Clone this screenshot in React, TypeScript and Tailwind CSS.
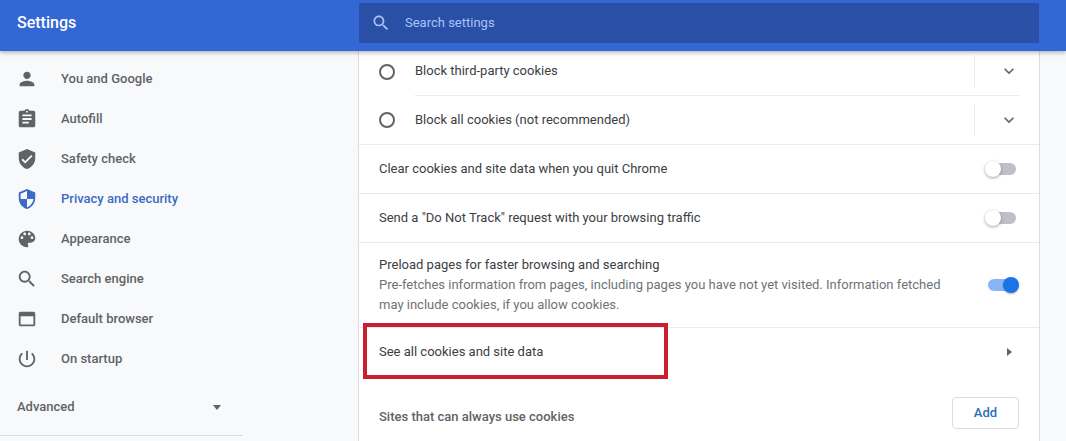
const P = {
  person: "M12 12c2.21 0 4-1.79 4-4s-1.79-4-4-4-4 1.79-4 4 1.79 4 4 4zm0 2c-2.67 0-8 1.34-8 4v2h16v-2c0-2.66-5.33-4-8-4z",
  assignment: "M19 3h-4.18C14.4 1.84 13.3 1 12 1c-1.3 0-2.4.84-2.82 2H5c-1.1 0-2 .9-2 2v14c0 1.1.9 2 2 2h14c1.1 0 2-.9 2-2V5c0-1.1-.9-2-2-2zm-7 0c.55 0 1 .45 1 1s-.45 1-1 1-1-.45-1-1 .45-1 1-1zm2 14H7v-2h7v2zm3-4H7v-2h10v2zm0-4H7V7h10v2z",
  verified: "M12 1L3 5v6c0 5.55 3.84 10.74 9 12 5.16-1.26 9-6.45 9-12V5l-9-4zm-2 16l-4-4 1.41-1.41L10 14.17l6.59-6.59L18 9l-8 8z",
  security: "M12 1L3 5v6c0 5.55 3.84 10.74 9 12 5.16-1.26 9-6.45 9-12V5l-9-4zm0 10.99h7c-.53 4.12-3.28 7.79-7 8.94V12H5V6.3l7-3.11v8.8z",
  palette: "M12 3c-4.97 0-9 4.03-9 9s4.03 9 9 9c.83 0 1.5-.67 1.5-1.5 0-.39-.15-.74-.39-1.01-.23-.26-.38-.61-.38-.99 0-.83.67-1.5 1.5-1.5H16c2.76 0 5-2.24 5-5 0-4.42-4.03-8-9-8zm-5.5 9c-.83 0-1.5-.67-1.5-1.5S5.67 9 6.5 9 8 9.67 8 10.5 7.33 12 6.5 12zm3-4C8.67 8 8 7.33 8 6.5S8.67 5 9.5 5s1.5.67 1.5 1.5S10.33 8 9.5 8zm5 0c-.83 0-1.5-.67-1.5-1.5S13.67 5 14.5 5s1.5.67 1.5 1.5S15.33 8 14.5 8zm3 4c-.83 0-1.5-.67-1.5-1.5S16.67 9 17.5 9s1.5.67 1.5 1.5-.67 1.5-1.5 1.5z",
  search: "M15.5 14h-.79l-.28-.27C15.41 12.59 16 11.11 16 9.5 16 5.91 13.09 3 9.5 3S3 5.91 3 9.5 5.91 16 9.5 16c1.61 0 3.09-.59 4.23-1.57l.27.28v.79l5 4.99L20.49 19l-4.99-5zm-6 0C7.01 14 5 11.99 5 9.5S7.01 5 9.5 5 14 7.01 14 9.5 11.99 14 9.5 14z",
  web: "M19 4H5c-1.11 0-2 .9-2 2v12c0 1.1.89 2 2 2h14c1.1 0 2-.9 2-2V6c0-1.1-.89-2-2-2zm0 14H5V9h14v9z",
  power: "M13 3h-2v10h2V3zm4.83 2.17l-1.42 1.42C17.99 7.86 19 9.81 19 12c0 3.87-3.13 7-7 7s-7-3.13-7-7c0-2.19 1.01-4.14 2.58-5.42L6.17 5.17C4.23 6.82 3 9.26 3 12c0 4.97 4.03 9 9 9s9-4.03 9-9c0-2.74-1.23-5.18-3.17-6.83z",
  chevron: "M7.41 8.59L12 13.17l4.59-4.58L18 10l-6 6-6-6 1.41-1.41z",
};

function Icon({ d, className }: { d: string; className: string }) {
  return (
    <svg viewBox="0 0 24 24" className={className} fill="currentColor">
      <path d={d} />
    </svg>
  );
}

const nav = [
  { label: "You and Google", icon: P.person },
  { label: "Autofill", icon: P.assignment },
  { label: "Safety check", icon: P.verified },
  { label: "Privacy and security", icon: P.security, active: true },
  { label: "Appearance", icon: P.palette },
  { label: "Search engine", icon: P.search },
  { label: "Default browser", icon: P.web },
  { label: "On startup", icon: P.power },
];

function Toggle({ on }: { on?: boolean }) {
  return (
    <div className="relative w-[34px] h-4 shrink-0">
      <div className={`absolute left-[3px] right-[3px] top-[2px] h-3 rounded-full ${on ? "bg-[#8ab4f8]" : "bg-[#bdc1c6]"}`} />
      {on ? (
        <div className="absolute right-0 top-0 w-4 h-4 rounded-full bg-[#1a73e8] shadow-[0_1px_2px_rgba(60,64,67,0.4)]" />
      ) : (
        <div className="absolute left-0 top-0 w-4 h-4 rounded-full bg-white shadow-[0_1px_3px_rgba(60,64,67,0.5)]" />
      )}
    </div>
  );
}

function RadioRow({ label, first }: { label: string; first?: boolean }) {
  return (
    <div className={`flex items-center pl-5 pr-5 ${first ? "h-[49px]" : "h-12"}`}>
      <div className="w-4 h-4 rounded-full border-2 border-[#5f6368] shrink-0" />
      <div className={`flex items-center flex-1 h-full ml-5 ${first ? "border-b border-[#e8eaed]" : ""}`}>
        <span className="flex-1">{label}</span>
        <div className="w-px h-8 bg-[#e8eaed]" />
        <div className="w-[44px] flex justify-end">
          <Icon d={P.chevron} className="w-5 h-5 text-[#5f6368]" />
        </div>
      </div>
    </div>
  );
}

export default function App() {
  return (
    <div className="relative w-[1066px] h-[441px] overflow-hidden bg-[#f8f9fa] text-[13px] leading-5 font-['Roboto',sans-serif] text-[#3c4043]">
      <header className="relative z-10 h-[51px] flex bg-[#3367d6] shadow-[0_2px_4px_rgba(60,64,67,0.35)]">
        <div className="w-[359px] pl-[17px] pt-[13px] text-[16px] leading-5 font-medium text-white">Settings</div>
        <div className="w-[680px] h-10 mt-[3px] flex items-center rounded-[1px] bg-[#2a4fa6] text-[#a8c4f5]">
          <Icon d={P.search} className="w-5 h-5 ml-3" />
          <span className="ml-[14px]">Search settings</span>
        </div>
      </header>

      <div className="flex">
        <aside className="w-[358px] shrink-0 pt-2 font-medium text-[#5f6368]">
          {nav.map((n) => (
            <div key={n.label} className={`flex items-center h-10 pl-4 ${n.active ? "text-[#3c6bc4]" : ""}`}>
              <Icon d={n.icon} className="w-[22px] h-[22px] shrink-0" />
              <span className="ml-[23px]">{n.label}</span>
            </div>
          ))}
          <div className="flex items-center h-10 mt-2 pl-[17px] w-[243px] pr-[22px]">
            <span className="flex-1">Advanced</span>
            <div className="w-0 h-0 border-x-[4px] border-x-transparent border-t-[5px] border-t-[#5f6368]" />
          </div>
          <div className="w-[243px] h-px mt-2 bg-[#dadce0]" />
        </aside>

        <main className="w-[682px] shrink-0 h-[400px] -mt-1 bg-white border-x border-[#dadce0] text-[#3c4043]">
          <RadioRow label="Block third-party cookies" first />
          <RadioRow label="Block all cookies (not recommended)" />
          <div className="flex items-center h-[49px] px-5 border-t border-[#e8eaed]">
            <span className="flex-1">Clear cookies and site data when you quit Chrome</span>
            <Toggle />
          </div>
          <div className="flex items-center h-[49px] px-5 border-t border-[#e8eaed]">
            <span className="flex-1">Send a "Do Not Track" request with your browsing traffic</span>
            <Toggle />
          </div>
          <div className="flex items-center h-[85px] px-5 border-t border-[#e8eaed]">
            <div className="flex-1">
              <div>Preload pages for faster browsing and searching</div>
              <div className="text-[#6f7377]">
                Pre-fetches information from pages, including pages you have not yet visited. Information fetched
                <br />
                may include cookies, if you allow cookies.
              </div>
            </div>
            <Toggle on />
          </div>
          <div className="flex items-center h-12 px-5 border-t border-[#e8eaed]">
            <span className="flex-1">See all cookies and site data</span>
            <div className="mr-[7px] w-0 h-0 border-y-[4px] border-y-transparent border-l-[5px] border-l-[#5f6368]" />
          </div>
          <div className="flex items-start px-5 pt-[22px]">
            <span className="flex-1 mt-[10px] font-medium text-[#5f6368]">Sites that can always use cookies</span>
            <button className="w-[67px] h-8 rounded border border-[#dadce0] bg-white font-medium text-[#2a6fbb]">Add</button>
          </div>
        </main>
      </div>

      <div className="absolute left-[363px] top-[323px] w-[305px] h-[56px] border-[4px] border-[#c8202f]" />
    </div>
  );
}
